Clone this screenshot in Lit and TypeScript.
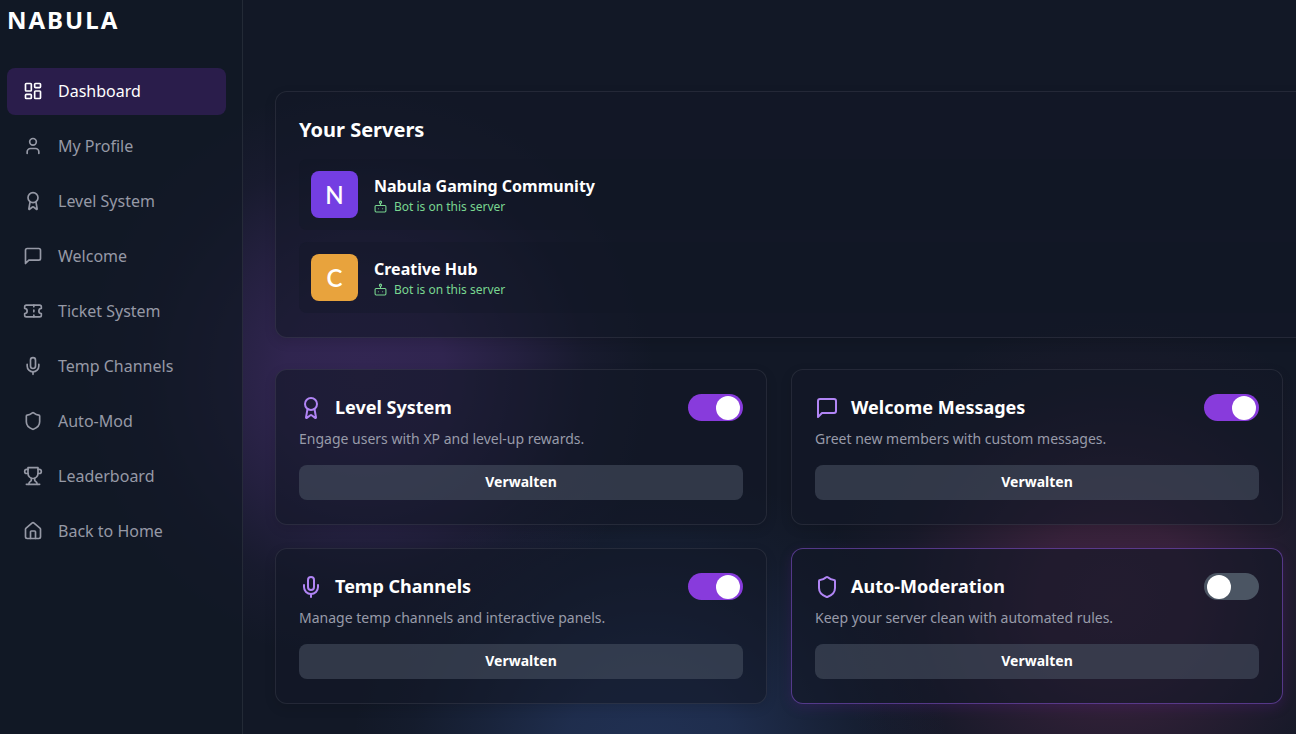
import { LitElement, html, css, svg, nothing } from "lit";
import { customElement, property, state } from "lit/decorators.js";

const icons: Record<string, unknown> = {
  dashboard: svg`<rect width="7" height="9" x="3" y="3" rx="1"/><rect width="7" height="5" x="14" y="3" rx="1"/><rect width="7" height="9" x="14" y="12" rx="1"/><rect width="7" height="5" x="3" y="16" rx="1"/>`,
  user: svg`<path d="M19 21v-2a4 4 0 0 0-4-4H9a4 4 0 0 0-4 4v2"/><circle cx="12" cy="7" r="4"/>`,
  award: svg`<path d="m15.477 12.89 1.515 8.526a.5.5 0 0 1-.81.47l-3.58-2.687a1 1 0 0 0-1.197 0l-3.586 2.686a.5.5 0 0 1-.81-.469l1.514-8.526"/><circle cx="12" cy="8" r="6"/>`,
  message: svg`<path d="M21 15a2 2 0 0 1-2 2H7l-4 4V5a2 2 0 0 1 2-2h14a2 2 0 0 1 2 2z"/>`,
  ticket: svg`<path d="M2 9a3 3 0 0 1 0 6v2a2 2 0 0 0 2 2h16a2 2 0 0 0 2-2v-2a3 3 0 0 1 0-6V7a2 2 0 0 0-2-2H4a2 2 0 0 0-2 2Z"/><path d="M13 5v2"/><path d="M13 17v2"/><path d="M13 11v2"/>`,
  mic: svg`<path d="M12 2a3 3 0 0 0-3 3v7a3 3 0 0 0 6 0V5a3 3 0 0 0-3-3Z"/><path d="M19 10v2a7 7 0 0 1-14 0v-2"/><path d="M12 19v3"/>`,
  shield: svg`<path d="M20 13c0 5-3.5 7.5-7.66 8.95a1 1 0 0 1-.67-.01C7.5 20.5 4 18 4 13V6a1 1 0 0 1 1-1c2 0 4.5-1.2 6.24-2.72a1.17 1.17 0 0 1 1.52 0C14.51 3.81 17 5 19 5a1 1 0 0 1 1 1z"/>`,
  trophy: svg`<path d="M6 9H4.5a2.5 2.5 0 0 1 0-5H6"/><path d="M18 9h1.5a2.5 2.5 0 0 0 0-5H18"/><path d="M4 22h16"/><path d="M10 14.66V17c0 .55-.47.98-.97 1.21C7.85 18.75 7 20.24 7 22"/><path d="M14 14.66V17c0 .55.47.98.97 1.21C16.15 18.75 17 20.24 17 22"/><path d="M18 2H6v7a6 6 0 0 0 12 0V2Z"/>`,
  home: svg`<path d="M15 21v-8a1 1 0 0 0-1-1h-4a1 1 0 0 0-1 1v8"/><path d="M3 10a2 2 0 0 1 .709-1.528l7-5.999a2 2 0 0 1 2.582 0l7 5.999A2 2 0 0 1 21 10v9a2 2 0 0 1-2 2H5a2 2 0 0 1-2-2z"/>`,
  bot: svg`<rect width="20" height="12" x="2" y="10" rx="2"/><circle cx="12" cy="4" r="2"/><path d="M12 6v4"/><path d="M8 16h.01"/><path d="M16 16h.01"/>`,
};

@customElement("nb-icon")
class NbIcon extends LitElement {
  @property() name = "";

  static styles = css`
    :host {
      display: block;
      flex: none;
    }
    .glyph {
      display: block;
      width: 100%;
      height: 100%;
      fill: none;
      stroke: currentColor;
      stroke-width: 2;
      stroke-linecap: round;
      stroke-linejoin: round;
    }
  `;

  render() {
    return html`<svg class="glyph" viewBox="0 0 24 24" aria-hidden="true">${icons[this.name] ?? nothing}</svg>`;
  }
}

@customElement("feature-card")
class FeatureCard extends LitElement {
  @property() icon = "";
  @property() heading = "";
  @property() text = "";
  @property({ type: Boolean }) enabled = false;

  static styles = css`
    :host {
      display: block;
      box-sizing: border-box;
      min-width: 0;
      padding: 24px 23px;
      border: 1px solid rgba(255, 255, 255, 0.08);
      border-radius: 12px;
      background: rgba(18, 24, 38, 0.6);
      box-shadow: 0 4px 12px rgba(0, 0, 0, 0.12);
    }
    :host([highlighted]) {
      border-color: rgba(147, 88, 232, 0.5);
      box-shadow: 0 4px 12px rgba(88, 28, 135, 0.25);
    }
    .head {
      display: flex;
      align-items: center;
      gap: 12px;
      height: 27px;
    }
    .icon {
      width: 24px;
      height: 24px;
      color: #b185f5;
    }
    .title {
      flex: 1;
      margin: 0;
      font-size: 18px;
      line-height: 27px;
      font-weight: 700;
      color: #fff;
    }
    .switch {
      appearance: none;
      flex: none;
      width: 55px;
      height: 27px;
      margin: 0;
      padding: 2px 3px;
      box-sizing: border-box;
      display: flex;
      align-items: center;
      border-radius: 14px;
      background: #4b5563;
      cursor: pointer;
    }
    .switch::before {
      content: "";
      width: 24px;
      height: 24px;
      border-radius: 50%;
      background: #fff;
    }
    .switch:checked {
      background: #883bdc;
      justify-content: flex-end;
    }
    .text {
      margin: 8px 0 16px;
      font-size: 14px;
      line-height: 20px;
      color: #989ba9;
    }
    .manage {
      display: block;
      width: 100%;
      height: 35px;
      padding: 0 0 1px;
      border: 0;
      border-radius: 8px;
      background: rgba(75, 84, 101, 0.55);
      color: #fff;
      font: 700 14px/20px "Noto Sans", sans-serif;
      cursor: pointer;
    }
  `;

  render() {
    return html`
      <div class="head">
        <nb-icon class="icon" name=${this.icon}></nb-icon>
        <h3 class="title"><label for="toggle">${this.heading}</label></h3>
        <input class="switch" id="toggle" type="checkbox" role="switch" .checked=${this.enabled} />
      </div>
      <p class="text">${this.text}</p>
      <button class="manage" type="button">Verwalten</button>
    `;
  }
}

@customElement("app-root")
class AppRoot extends LitElement {
  @state() active = "Dashboard";

  private nav = [
    ["dashboard", "Dashboard"],
    ["user", "My Profile"],
    ["award", "Level System"],
    ["message", "Welcome"],
    ["ticket", "Ticket System"],
    ["mic", "Temp Channels"],
    ["shield", "Auto-Mod"],
    ["trophy", "Leaderboard"],
    ["home", "Back to Home"],
  ];

  private servers = [
    { name: "Nabula Gaming Community", letter: "N", tone: "violet" },
    { name: "Creative Hub", letter: "C", tone: "amber" },
  ];

  static styles = css`
    :host {
      display: grid;
      grid-template-columns: 243px minmax(0, 1fr);
      min-height: 100vh;
      overflow: hidden;
      font-family: "Noto Sans", sans-serif;
      color: #fff;
      background:
        radial-gradient(circle at 365px 375px, rgba(137, 76, 202, 0.27) 0, rgba(137, 76, 202, 0.25) 80px, rgba(137, 76, 202, 0.15) 155px, rgba(137, 76, 202, 0.05) 220px, transparent 290px),
        radial-gradient(circle at 650px 765px, rgba(73, 116, 206, 0.27) 0, rgba(73, 116, 206, 0.23) 90px, rgba(73, 116, 206, 0.12) 170px, rgba(73, 116, 206, 0.04) 240px, transparent 300px),
        radial-gradient(circle at 1115px 600px, rgba(185, 68, 130, 0.25) 0, rgba(185, 68, 130, 0.22) 80px, rgba(185, 68, 130, 0.12) 150px, rgba(185, 68, 130, 0.04) 215px, transparent 290px),
        #121826;
    }
    .sidebar {
      box-sizing: border-box;
      padding: 4px 16px 0 7px;
      border-right: 1px solid rgba(255, 255, 255, 0.08);
      background: rgba(18, 24, 38, 0.75);
    }
    .logo {
      margin: 0 0 32px;
      font-size: 24px;
      line-height: 32px;
      font-weight: 700;
      letter-spacing: 2px;
    }
    .nav {
      display: flex;
      flex-direction: column;
      gap: 8px;
    }
    .link {
      display: flex;
      align-items: center;
      gap: 15px;
      box-sizing: border-box;
      height: 47px;
      padding: 0 16px 1px;
      border-radius: 8px;
      font-size: 16px;
      line-height: 24px;
      color: #9699a6;
      text-decoration: none;
    }
    .link.active {
      background: #2a1d4b;
      color: #fff;
    }
    .link-icon {
      width: 20px;
      height: 20px;
    }
    .main {
      padding: 91px 13px 30px 32px;
    }
    .servers {
      margin: 0 -40px 31px 0;
      padding: 24px 23px;
      border: 1px solid rgba(255, 255, 255, 0.08);
      border-radius: 12px;
      background: rgba(18, 24, 38, 0.6);
      box-shadow: 0 4px 12px rgba(0, 0, 0, 0.12);
    }
    .section-title {
      margin: 0 0 15px;
      font-size: 20px;
      line-height: 28px;
      font-weight: 700;
    }
    .list {
      display: grid;
      gap: 12px;
      margin: 0;
      padding: 0;
      list-style: none;
    }
    .server {
      display: flex;
      align-items: center;
      gap: 16px;
      padding: 12px;
      border-radius: 8px;
      background: rgba(17, 24, 36, 0.3);
    }
    .avatar {
      display: grid;
      place-items: center;
      width: 47px;
      height: 47px;
      border-radius: 8px;
      font: 600 24px/24px Lato, sans-serif;
    }
    .violet {
      background: #743ee2;
    }
    .amber {
      background: #e8a33d;
    }
    .name {
      margin: 0 0 2px;
      font-size: 16px;
      line-height: 22px;
      font-weight: 700;
    }
    .status {
      display: flex;
      align-items: center;
      gap: 7px;
      margin: 0;
      font-size: 12px;
      line-height: 16px;
      color: #79d690;
    }
    .status-icon {
      width: 13px;
      height: 13px;
    }
    .features {
      display: grid;
      grid-template-columns: repeat(2, minmax(0, 1fr));
      gap: 23px 24px;
    }
  `;

  render() {
    return html`
      <aside class="sidebar">
        <h1 class="logo">NABULA</h1>
        <nav class="nav">
          ${this.nav.map(
            ([icon, label]) => html`<a
              class="link ${label === this.active ? "active" : ""}"
              href="#"
              @click=${(e: Event) => {
                e.preventDefault();
                this.active = label;
              }}
              ><nb-icon class="link-icon" name=${icon}></nb-icon>${label}</a
            >`
          )}
        </nav>
      </aside>
      <main class="main">
        <section class="servers">
          <h2 class="section-title">Your Servers</h2>
          <ul class="list">
            ${this.servers.map(
              (s) => html`<li class="server">
                <span class="avatar ${s.tone}">${s.letter}</span>
                <div>
                  <h3 class="name">${s.name}</h3>
                  <p class="status"><nb-icon class="status-icon" name="bot"></nb-icon>Bot is on this server</p>
                </div>
              </li>`
            )}
          </ul>
        </section>
        <section class="features">
          <feature-card icon="award" heading="Level System" text="Engage users with XP and level-up rewards." enabled></feature-card>
          <feature-card icon="message" heading="Welcome Messages" text="Greet new members with custom messages." enabled></feature-card>
          <feature-card icon="mic" heading="Temp Channels" text="Manage temp channels and interactive panels." enabled></feature-card>
          <feature-card icon="shield" heading="Auto-Moderation" text="Keep your server clean with automated rules." highlighted></feature-card>
        </section>
      </main>
    `;
  }
}
